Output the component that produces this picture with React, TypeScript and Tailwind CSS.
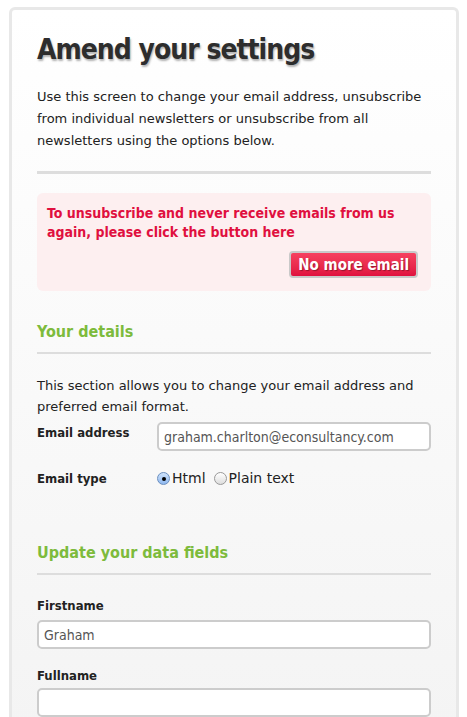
export default function App() {
  return (
    <div className="min-h-screen bg-white pt-[7px] pl-[9px] pr-[8px] font-['DejaVu_Sans',sans-serif] text-[#333]">
      <div className="h-[720px] rounded-t-[6px] border-[3px] border-b-0 border-[#e8e8e8] bg-gradient-to-b from-white to-[#f4f4f4] px-[25px] pt-[22px]">
        <h1 className="font-['DejaVu_Sans_Condensed','DejaVu_Sans',sans-serif] text-[28px] font-bold leading-[36px] tracking-[-1px] text-[#2d2d2d] [text-shadow:1px_2px_2px_rgba(0,0,0,0.3)]">
          Amend your settings
        </h1>
        <p className="mt-[18px] text-[13px] leading-[22px] text-[#222]">
          Use this screen to change your email address, unsubscribe from individual newsletters or unsubscribe from all newsletters using the options below.
        </p>
        <div className="mt-[19px] h-[3px] bg-[#dddddd]" />

        <div className="mt-[19px] rounded-[6px] bg-[#fdeff0] px-[10px] pt-[11px] pb-[13px]">
          <p className="font-['DejaVu_Sans_Condensed','DejaVu_Sans',sans-serif] text-[14px] font-bold leading-[19px] text-[#e0103f]">
            To unsubscribe and never receive emails from us again, please click the button here
          </p>
          <div className="mt-[9px] flex justify-end pr-[3px]">
            <button className="h-[27px] rounded-[4px] border-2 border-[#c9c9c9] bg-gradient-to-b from-[#f6405f] to-[#e0103f] px-[7px] font-['DejaVu_Sans_Condensed','DejaVu_Sans',sans-serif] text-[15px] font-bold leading-[20px] text-white [text-shadow:1px_1px_1px_rgba(0,0,0,0.35)]">
              No more email
            </button>
          </div>
        </div>

        <h2 className="mt-[30px] font-['DejaVu_Sans_Condensed','DejaVu_Sans',sans-serif] text-[16px] font-bold leading-[22px] text-[#7dbb3c]">Your details</h2>
        <div className="mt-[9px] h-[2px] bg-[#dddddd]" />

        <p className="mt-[21px] text-[13px] leading-[21px] text-[#222]">
          This section allows you to change your email address and preferred email format.
        </p>
        <div className="mt-[5px] flex items-start">
          <label className="w-[120px] pt-[1px] font-['DejaVu_Sans_Condensed','DejaVu_Sans',sans-serif] text-[13px] font-bold text-[#222]">Email address</label>
          <input
            defaultValue="graham.charlton@econsultancy.com"
            className="h-[29px] flex-1 rounded-[5px] border-2 border-[#cccccc] bg-white px-[5px] font-['DejaVu_Sans_Condensed','DejaVu_Sans',sans-serif] text-[14px] text-[#555] outline-none"
          />
        </div>
        <div className="mt-[17px] flex items-center">
          <span className="w-[120px] font-['DejaVu_Sans_Condensed','DejaVu_Sans',sans-serif] text-[13px] font-bold text-[#222]">Email type</span>
          <label className="flex items-center text-[14px] text-[#222]">
            <span className="mr-[2px] flex h-[13px] w-[13px] items-center justify-center rounded-full border border-[#6b8fbf] bg-gradient-to-b from-[#cfe3fb] to-[#8fb8ef]">
              <span className="h-[4px] w-[4px] rounded-full bg-black" />
            </span>
            Html
          </label>
          <label className="ml-[8px] flex items-center text-[14px] text-[#222]">
            <span className="mr-[2px] h-[13px] w-[13px] rounded-full border border-[#999] bg-gradient-to-b from-white to-[#ddd]" />
            Plain text
          </label>
        </div>

        <h2 className="mt-[53px] font-['DejaVu_Sans_Condensed','DejaVu_Sans',sans-serif] text-[16px] font-bold leading-[22px] text-[#7dbb3c]">Update your data fields</h2>
        <div className="mt-[9px] h-[2px] bg-[#dddddd]" />

        <label className="mt-[22px] block font-['DejaVu_Sans_Condensed','DejaVu_Sans',sans-serif] text-[13px] font-bold leading-[18px] text-[#222]">Firstname</label>
        <input
          defaultValue="Graham"
          className="mt-[5px] block h-[29px] w-full rounded-[5px] border-2 border-[#cccccc] bg-white px-[5px] font-['DejaVu_Sans_Condensed','DejaVu_Sans',sans-serif] text-[14px] text-[#555] outline-none"
        />
        <label className="mt-[18px] block font-['DejaVu_Sans_Condensed','DejaVu_Sans',sans-serif] text-[13px] font-bold leading-[18px] text-[#222]">Fullname</label>
        <input className="mt-[3px] block h-[29px] w-full rounded-[5px] border-2 border-[#cccccc] bg-white px-[5px] text-[14px] outline-none" />
      </div>
    </div>
  )
}
